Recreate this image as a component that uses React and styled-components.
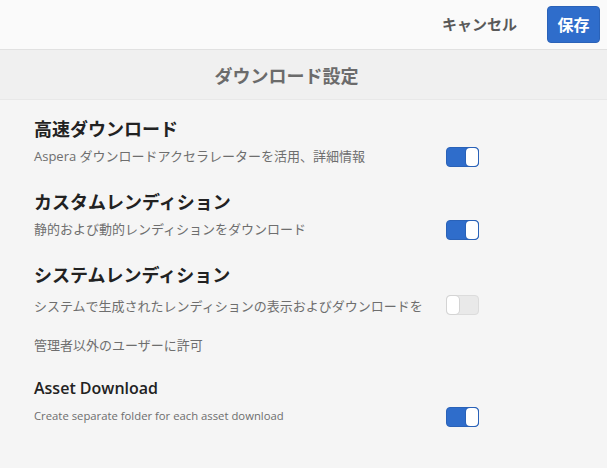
import React from "react";
import styled, { createGlobalStyle } from "styled-components";

const GlobalStyle = createGlobalStyle`
  html, body {
    margin: 0;
    padding: 0;
    background: #f5f5f5;
  }
  body {
    font-family: "Open Sans", "Noto Sans CJK JP", sans-serif;
  }
`;

const Page = styled.div`
  width: 607px;
  height: 468px;
  background: #f5f5f5;
  overflow: hidden;
`;

const Toolbar = styled.div`
  height: 50px;
  background: #fafafa;
  border-bottom: 1px solid #e1e1e1;
  display: flex;
  align-items: center;
  justify-content: flex-end;
  padding-right: 7px;
  box-sizing: border-box;
  gap: 30px;
`;

const CancelButton = styled.button`
  border: 0;
  background: transparent;
  font-family: "Noto Sans CJK JP", sans-serif;
  font-size: 15px;
  font-weight: 700;
  color: #595959;
  padding: 0;
  margin-top: -3px;
`;

const SaveButton = styled.button`
  width: 53px;
  height: 37px;
  border: 1px solid #2a62b8;
  border-radius: 4px;
  background: #2f6dcb;
  color: #fff;
  font-family: "Noto Sans CJK JP", sans-serif;
  font-size: 16px;
  font-weight: 700;
  padding: 0;
  margin-top: -1px;
`;

const TitleBar = styled.div`
  height: 50px;
  background: #f0f0f0;
  border-bottom: 1px solid #e8e8e8;
  display: flex;
  align-items: center;
  justify-content: center;
  padding-right: 34px;
  box-sizing: border-box;
  font-family: "Noto Sans CJK JP", sans-serif;
  font-size: 18px;
  font-weight: 700;
  color: #6b6b6b;
`;

const Content = styled.div`
  padding: 15px 0 0 34px;
  display: flex;
  flex-direction: column;
`;

const Section = styled.div`
  margin-bottom: ${(p) => p.$gap}px;
`;

const Heading = styled.div`
  font-family: ${(p) =>
    p.$latin ? `"Open Sans", sans-serif` : `"Noto Sans CJK JP", sans-serif`};
  font-size: ${(p) => (p.$latin ? 16 : 18)}px;
  font-weight: ${(p) => (p.$latin ? 600 : 700)};
  color: #222;
  line-height: 26px;
`;

const Row = styled.div`
  display: flex;
  align-items: flex-start;
`;

const Description = styled.div`
  width: 412px;
  font-family: ${(p) =>
    p.$latin ? `"Open Sans", sans-serif` : `"Open Sans", "Noto Sans CJK JP", sans-serif`};
  font-size: ${(p) => (p.$latin ? 11.3 : 13)}px;
  color: #6e6e6e;
  line-height: ${(p) => (p.$multi ? 39 : 30)}px;
`;

const Switch = styled.span`
  position: relative;
  display: block;
  width: 33px;
  height: 20px;
  margin-top: ${(p) => p.$top}px;
  box-sizing: border-box;
  border-radius: 4px;
  background: ${(p) => (p.$on ? "#2f6dcb" : "#e9e9e9")};
  border: 1px solid ${(p) => (p.$on ? "#2a62b8" : "#dcdcdc")};
`;

const Knob = styled.span`
  position: absolute;
  top: 0;
  ${(p) => (p.$on ? "right: 0;" : "left: 0;")}
  width: 12px;
  height: 18px;
  border-radius: 4px;
  background: #fff;
  box-shadow: 0 0 0 1px ${(p) => (p.$on ? "#2a62b8" : "#d4d4d4")};
`;

const Toggle = ({ on, top = 6 }) => (
  <Switch $on={on} $top={top}>
    <Knob $on={on} />
  </Switch>
);

const App = () => (
  <Page>
    <GlobalStyle />
    <Toolbar>
      <CancelButton>キャンセル</CancelButton>
      <SaveButton>保存</SaveButton>
    </Toolbar>
    <TitleBar>ダウンロード設定</TitleBar>
    <Content>
      <Section $gap={17}>
        <Heading>高速ダウンロード</Heading>
        <Row>
          <Description>Aspera ダウンロードアクセラレーターを活用、詳細情報</Description>
          <Toggle on />
        </Row>
      </Section>
      <Section $gap={17}>
        <Heading>カスタムレンディション</Heading>
        <Row>
          <Description>静的および動的レンディションをダウンロード</Description>
          <Toggle on />
        </Row>
      </Section>
      <Section $gap={10}>
        <Heading>システムレンディション</Heading>
        <Row>
          <Description $multi>
            システムで生成されたレンディションの表示およびダウンロードを
            <br />
            管理者以外のユーザーに許可
          </Description>
          <Toggle on={false} top={8} />
        </Row>
      </Section>
      <Section $gap={0}>
        <Heading $latin>Asset Download</Heading>
        <Row>
          <Description $latin>Create separate folder for each asset download</Description>
          <Toggle on />
        </Row>
      </Section>
    </Content>
  </Page>
);

export default App;
